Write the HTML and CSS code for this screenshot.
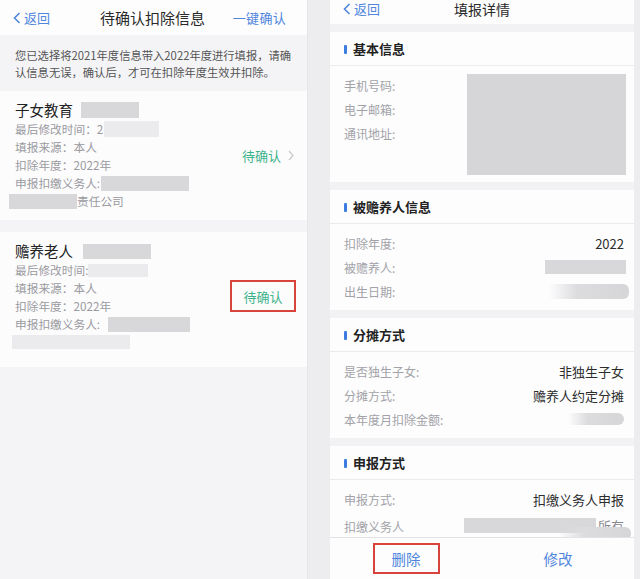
FILE: index.html
```html
<!DOCTYPE html>
<html lang="zh-CN">
<head>
<meta charset="utf-8">
<title>待确认扣除信息 / 填报详情</title>
<link rel="stylesheet" href="styles.css">
</head>
<body>
<div class="page">
  <section class="phone phone-left">
    <header class="nav">
      <span class="back"><svg class="chev" viewBox="0 0 8 12"><path d="M6.5 1 1.5 6l5 5"/></svg>返回</span>
      <span class="nav-title">待确认扣除信息</span>
      <span class="nav-action">一键确认</span>
    </header>
    <p class="notice">您已选择将2021年度信息带入2022年度进行填报，请确认信息无误，确认后，才可在扣除年度生效并扣除。</p>
    <div class="card">
      <div class="card-body">
        <div class="card-title">子女教育<span class="mask m-t1"></span></div>
        <div class="line">最后修改时间：2<span class="mask light m-time1"></span></div>
        <div class="line">填报来源：本人</div>
        <div class="line">扣除年度：2022年</div>
        <div class="line">申报扣缴义务人:<span class="mask m-org1"></span></div>
        <div class="line"><span class="mask m-org1b"></span>责任公司</div>
      </div>
      <div class="status">待确认<svg class="arrow" viewBox="0 0 6 11"><path d="M1 1l4 4.5L1 10"/></svg></div>
    </div>
    <div class="card card-2">
      <div class="card-body">
        <div class="card-title">赡养老人<span class="mask m-t2"></span></div>
        <div class="line">最后修改时间:<span class="mask light m-time2"></span></div>
        <div class="line">填报来源：本人</div>
        <div class="line">扣除年度：2022年</div>
        <div class="line">申报扣缴义务人:<span class="mask m-org2"></span></div>
        <div class="line"><span class="mask light m-org2b"></span></div>
      </div>
      <div class="status boxed">待确认</div>
    </div>
  </section>

  <section class="phone phone-right">
    <header class="nav2">
      <span class="back back2"><svg class="chev" viewBox="0 0 8 12"><path d="M6.5 1 1.5 6l5 5"/></svg>返回</span>
      <span class="nav2-title">填报详情</span>
      <span class="nav2-spacer"></span>
    </header>
    <main class="scroll">
      <div class="sec">
        <div class="sec-head">基本信息</div>
        <div class="sec-grid">
          <div class="labels">
            <div class="row">手机号码:</div>
            <div class="row">电子邮箱:</div>
            <div class="row">通讯地址:</div>
          </div>
          <div class="mask m-basic"></div>
        </div>
      </div>
      <div class="sec">
        <div class="sec-head">被赡养人信息</div>
        <div class="rows">
          <div class="row"><span>扣除年度:</span><span class="val">2022</span></div>
          <div class="row"><span>被赡养人:</span><span class="mask m-name"></span></div>
          <div class="row"><span>出生日期:</span><span class="mask fade m-birth"></span></div>
        </div>
      </div>
      <div class="sec">
        <div class="sec-head">分摊方式</div>
        <div class="rows">
          <div class="row"><span>是否独生子女:</span><span class="val">非独生子女</span></div>
          <div class="row"><span>分摊方式:</span><span class="val">赡养人约定分摊</span></div>
          <div class="row"><span>本年度月扣除金额:</span><span class="mask fade m-amount"></span></div>
        </div>
      </div>
      <div class="sec">
        <div class="sec-head">申报方式</div>
        <div class="rows">
          <div class="row"><span>申报方式:</span><span class="val">扣缴义务人申报</span></div>
          <div class="row row-last"><span>扣缴义务人</span><span class="agent"><span class="mask m-agent"></span><span class="val faint">所有</span><span class="mask fade m-agent-over"></span></span></div>
        </div>
      </div>
    </main>
    <footer class="bar">
      <span class="bar-btn"><span class="del">删除</span></span>
      <span class="bar-btn">修改</span>
    </footer>
  </section>
</div>
</body>
</html>
```

FILE: styles.css
```css
* { box-sizing: border-box; margin: 0; padding: 0; }
html, body { width: 640px; height: 579px; overflow: hidden; }
body {
  font-family: "Noto Sans CJK SC", "Noto Sans", sans-serif;
  background: #ededf0;
  color: #333;
}
.page { display: flex; height: 579px; }

.phone { height: 579px; display: flex; flex-direction: column; overflow: hidden; }

/* ---------- left ---------- */
.phone-left {
  width: 308px;
  background: #f4f4f7;
  border-right: 1px solid #e6e6ea;
}
.nav {
  height: 35px;
  background: #fdfdfe;
  display: grid;
  grid-template-columns: 1fr auto 1fr;
  align-items: center;
  padding: 0 21px 0 13px;
  flex: none;
}
.back {
  display: flex;
  align-items: center;
  gap: 3px;
  color: #4f86dc;
  font-size: 13px;
  white-space: nowrap;
}
.chev { width: 8px; height: 12px; fill: none; stroke: #4f86dc; stroke-width: 1.6; }
.nav-title { font-size: 15px; color: #2a2a2a; white-space: nowrap; padding-left: 6px; }
.nav-action { font-size: 13px; color: #4f86dc; text-align: right; white-space: nowrap; letter-spacing: 0.3px; }

.notice {
  font-size: 11.3px;
  line-height: 17px;
  color: #555;
  padding: 12px 14px 10px 15px;
  flex: none;
}

.card {
  background: #fcfcfd;
  display: flex;
  align-items: center;
  padding: 9px 12px 10px 15px;
  flex: none;
}
.card-2 { margin-top: 12px; padding-bottom: 16px; }
.card-body { flex: 1; }
.card-title {
  font-size: 14.5px;
  line-height: 20px;
  color: #222;
  display: flex;
  align-items: center;
}
.line {
  font-size: 11.7px;
  line-height: 18px;
  color: #9a9a9f;
  display: flex;
  align-items: center;
  height: 18px;
}
.mask { display: inline-block; background: #d8d8db; flex: none; }
.mask.light { background: #ebebee; }
.m-t1 { width: 58px; height: 16px; margin-left: 8px; }
.m-t2 { width: 68px; height: 15px; margin-left: 10px; }
.m-time1 { width: 55px; height: 16px; margin-left: 1px; }
.m-time2 { width: 60px; height: 13px; margin-left: 0; background: linear-gradient(90deg, #e6e6e9 0 55%, #efeff2 55%); }
.m-org1 { width: 88px; height: 15px; margin-left: 1px; }
.m-org1b { width: 68px; height: 15px; margin-left: -6px; }
.m-org2 { width: 82px; height: 15px; margin-left: 8px; }
.m-org2b { width: 118px; height: 14px; margin-left: -3px; background: #e8e8eb; }

.status {
  display: flex;
  align-items: center;
  gap: 7px;
  font-size: 13px;
  color: #3db38b;
  flex: none;
  padding-right: 1px;
}
.arrow { width: 6px; height: 11px; fill: none; stroke: #c9c9cd; stroke-width: 1.2; }
.status.boxed {
  border: 2px solid #d8433c;
  width: 66px;
  height: 32px;
  justify-content: center;
  padding: 0;
  margin-right: -1px;
}

/* ---------- right ---------- */
.phone-right {
  width: 304px;
  margin-left: 22px;
  background: #f2f2f5;
}
.nav2 {
  height: 24px;
  background: #fdfdfe;
  display: flex;
  justify-content: space-between;
  padding: 0 13px;
  flex: none;
}
.back2 { height: 17px; width: 60px; font-size: 13px; }
.nav2-title { font-size: 14px; line-height: 18px; color: #2a2a2a; }
.nav2-spacer { width: 60px; }

.scroll {
  flex: 1;
  overflow: hidden;
  display: flex;
  flex-direction: column;
  gap: 8px;
  padding-top: 8px;
}
.sec { background: #fdfdfe; flex: none; }
.sec-head {
  height: 34px;
  border-bottom: 1px solid #ececef;
  display: flex;
  align-items: center;
  padding-left: 23px;
  position: relative;
  font-size: 13px;
  font-weight: 700;
  color: #222;
}
.sec-head::before {
  content: "";
  position: absolute;
  left: 14px;
  top: 13px;
  width: 3px;
  height: 9px;
  background: #3d7de0;
  border-radius: 1px;
}
.sec-grid {
  display: grid;
  grid-template-columns: 1fr 159px;
  padding: 7px 8px 7px 14px;
  align-items: start;
}
.m-basic { height: 101px; margin-top: 1px; background: #d6d6d9; }
.rows { padding: 7px 10px 7px 14px; }
.row {
  height: 24px;
  display: flex;
  align-items: center;
  justify-content: space-between;
  font-size: 12px;
  color: #a2a2a7;
}
.val { font-size: 13px; color: #2c2c2c; }
.mask.fade { background: linear-gradient(90deg, rgba(216,216,219,0) 0%, #dcdcdf 35%, #d6d6d9 100%); border-radius: 0 6px 6px 0; }
.m-name { width: 81px; height: 14px; margin-right: -2px; }
.m-birth { width: 80px; height: 15px; margin-right: -5px; }
.m-amount { width: 56px; height: 12px; }
.row-last { align-items: flex-start; padding-top: 7px; }
.agent { display: flex; align-items: flex-start; position: relative; }
.m-agent { width: 132px; height: 15px; margin-top: 0; }
.faint { color: #8a8a8e; margin-left: 2px; line-height: 15px; }
.m-agent-over {
  position: absolute;
  right: -7px;
  top: 9px;
  width: 72px;
  height: 13px;
  background: linear-gradient(90deg, rgba(240,240,243,0.2), #ececef 30%, #e4e4e7);
}

.bar {
  height: 42px;
  flex: none;
  background: #fdfdfe;
  border-top: 1px solid #e2e2e6;
  display: flex;
}
.bar-btn {
  flex: 1;
  display: flex;
  align-items: center;
  justify-content: center;
  font-size: 14.5px;
  color: #4f86dc;
}
.del {
  border: 2px solid #d8433c;
  width: 67px;
  height: 31px;
  display: flex;
  align-items: center;
  justify-content: center;
}
```
